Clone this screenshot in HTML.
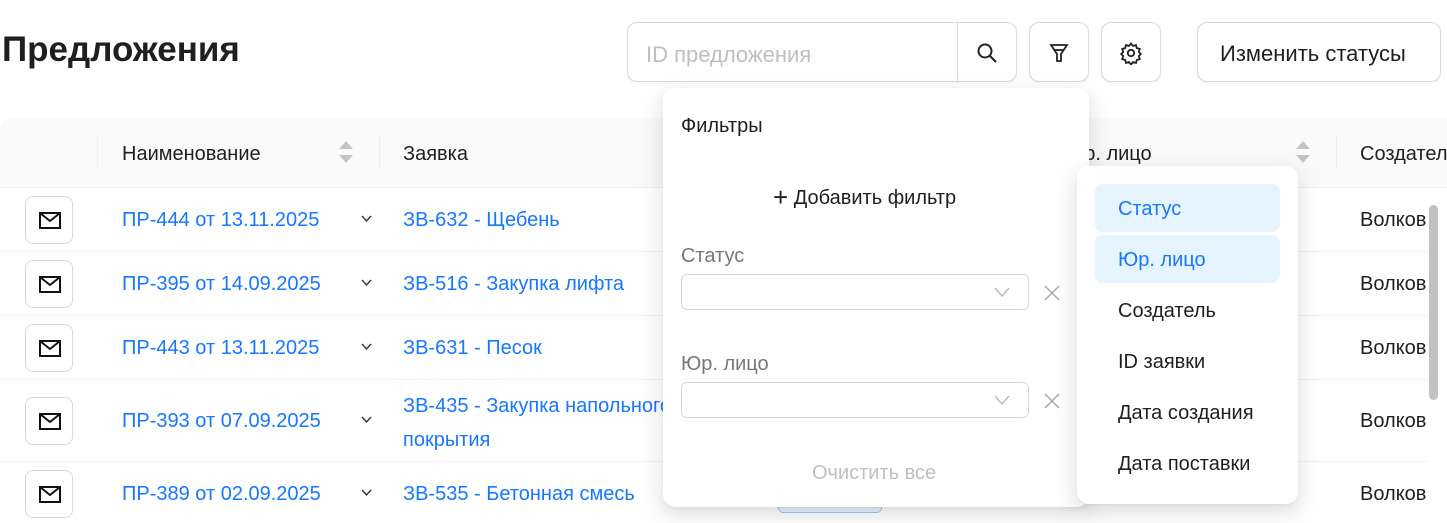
<!DOCTYPE html>
<html><head><meta charset="utf-8"><style>
*{box-sizing:border-box;margin:0;padding:0}
body{width:1447px;height:523px;overflow:hidden;background:#fff;font-family:"Liberation Sans","DejaVu Sans",sans-serif;color:#1f1f1f;position:relative}
.a{position:absolute}
.t{font-size:20px;white-space:nowrap}
.blue{color:#1677ff}
.btn{position:absolute;border:1px solid #d9d9d9;border-radius:10px;background:#fff;box-shadow:0 2px 0 rgba(0,0,0,.02)}
.row{position:absolute;left:0;width:1447px;border-bottom:1px solid #f0f0f0}
.mail{position:absolute;left:25px;width:48px;height:48px;border:1px solid #d9d9d9;border-radius:8px;background:#fff}
.mail svg{position:absolute;left:13px;top:15px}
.chev{position:absolute;left:361px}
.pop{position:absolute;background:#fff;border-radius:12px;box-shadow:0 6px 16px rgba(0,0,0,.08),0 3px 6px -4px rgba(0,0,0,.12),0 9px 28px 8px rgba(0,0,0,.05)}
.sel{position:absolute;left:18px;width:348px;height:36px;border:1px solid #d9d9d9;border-radius:6px}
.item{position:absolute;left:18px;width:185px;height:48px;border-radius:8px;font-size:20px;padding:14px 0 0 23px;white-space:nowrap}
</style></head><body>
<div class="a" style="left:2px;top:30px;font-size:35px;font-weight:bold">Предложения</div>

<div class="btn" style="left:627px;top:22px;width:390px;height:60px"></div>
<div class="a" style="left:957px;top:22px;width:1px;height:60px;background:#d9d9d9"></div>
<div class="a t" style="left:646px;top:42px;color:#bfbfbf;font-size:22px">ID предложения</div>
<svg class="a" style="left:975px;top:41px" width="24" height="24" viewBox="0 0 24 24" fill="none" stroke="#222" stroke-width="2"><circle cx="10" cy="10" r="6.5"/><path d="M15 15l6 6"/></svg>
<div class="btn" style="left:1029px;top:22px;width:60px;height:60px"></div>
<svg class="a" style="left:1048px;top:42px" width="22" height="22" viewBox="0 0 22 22" fill="none" stroke="#222" stroke-width="1.8"><path d="M3 3h16l-6 9v7h-4v-7z"/><path d="M6 8h10"/></svg>
<div class="btn" style="left:1101px;top:22px;width:60px;height:60px"></div>
<svg class="a" style="left:1119px;top:41px" width="24" height="24" viewBox="0 0 24 24" fill="none" stroke="#222" stroke-width="1.8"><circle cx="12" cy="12" r="3.2"/><path d="M12 2.5l2 2.5 3-1 .8 3 3 1-1 3 2 2-2 2 1 3-3 1-.8 3-3-1-2 2.5-2-2.5-3 1-.8-3-3-1 1-3-2-2 2-2-1-3 3-1 .8-3 3 1z"/></svg>
<div class="btn" style="left:1197px;top:22px;width:244px;height:60px"></div>
<div class="a t" style="left:1220px;top:41px;font-size:22px">Изменить статусы</div>

<div class="a" style="left:0;top:118px;width:1447px;height:70px;background:#fafafa;border-radius:10px 0 0 0;border-bottom:1px solid #f0f0f0"></div>
<div class="a" style="left:97px;top:136px;width:1px;height:34px;background:#f0f0f0"></div>
<div class="a" style="left:379px;top:136px;width:1px;height:34px;background:#f0f0f0"></div>
<div class="a" style="left:1336px;top:136px;width:1px;height:34px;background:#f0f0f0"></div>
<div class="a t" style="left:122px;top:143px">Наименование</div>
<div class="a" style="left:339px;top:141px;width:0;height:0;border:7px solid transparent;border-bottom:8px solid #c4c4c4;border-top:0"></div>
<div class="a" style="left:339px;top:155px;width:0;height:0;border:7px solid transparent;border-top:8px solid #c4c4c4;border-bottom:0"></div>
<div class="a t" style="left:403px;top:143px">Заявка</div>
<div class="a t" style="left:1064px;top:143px">Юр. лицо</div>
<div class="a" style="left:1296px;top:141px;width:0;height:0;border:7px solid transparent;border-bottom:8px solid #c4c4c4;border-top:0"></div>
<div class="a" style="left:1296px;top:155px;width:0;height:0;border:7px solid transparent;border-top:8px solid #c4c4c4;border-bottom:0"></div>
<div class="a t" style="left:1360px;top:143px">Создатель</div>

<div class="row" style="top:187px;height:65px"></div>
<div class="row" style="top:251px;height:65px"></div>
<div class="row" style="top:315px;height:65px"></div>
<div class="row" style="top:379px;height:83px"></div>

<div class="mail" style="top:196px"><svg width="22" height="18" viewBox="0 0 22 18" fill="none" stroke="#111" stroke-width="2"><rect x="1" y="1" width="20" height="15"/><path d="M1 1l10 8 10-8"/></svg></div>
<div class="mail" style="top:260px"><svg width="22" height="18" viewBox="0 0 22 18" fill="none" stroke="#111" stroke-width="2"><rect x="1" y="1" width="20" height="15"/><path d="M1 1l10 8 10-8"/></svg></div>
<div class="mail" style="top:324px"><svg width="22" height="18" viewBox="0 0 22 18" fill="none" stroke="#111" stroke-width="2"><rect x="1" y="1" width="20" height="15"/><path d="M1 1l10 8 10-8"/></svg></div>
<div class="mail" style="top:397px"><svg width="22" height="18" viewBox="0 0 22 18" fill="none" stroke="#111" stroke-width="2"><rect x="1" y="1" width="20" height="15"/><path d="M1 1l10 8 10-8"/></svg></div>
<div class="mail" style="top:470px"><svg width="22" height="18" viewBox="0 0 22 18" fill="none" stroke="#111" stroke-width="2"><rect x="1" y="1" width="20" height="15"/><path d="M1 1l10 8 10-8"/></svg></div>

<div class="a t blue" style="left:122px;top:209px">ПР-444 от 13.11.2025</div>
<div class="a t blue" style="left:122px;top:273px">ПР-395 от 14.09.2025</div>
<div class="a t blue" style="left:122px;top:337px">ПР-443 от 13.11.2025</div>
<div class="a t blue" style="left:122px;top:410px">ПР-393 от 07.09.2025</div>
<div class="a t blue" style="left:122px;top:483px">ПР-389 от 02.09.2025</div>
<svg class="chev" style="top:215px" width="11" height="8" viewBox="0 0 11 8" fill="none" stroke="#333" stroke-width="1.4"><path d="M1 1l4.5 5 4.5-5"/></svg>
<svg class="chev" style="top:279px" width="11" height="8" viewBox="0 0 11 8" fill="none" stroke="#333" stroke-width="1.4"><path d="M1 1l4.5 5 4.5-5"/></svg>
<svg class="chev" style="top:343px" width="11" height="8" viewBox="0 0 11 8" fill="none" stroke="#333" stroke-width="1.4"><path d="M1 1l4.5 5 4.5-5"/></svg>
<svg class="chev" style="top:416px" width="11" height="8" viewBox="0 0 11 8" fill="none" stroke="#333" stroke-width="1.4"><path d="M1 1l4.5 5 4.5-5"/></svg>
<svg class="chev" style="top:489px" width="11" height="8" viewBox="0 0 11 8" fill="none" stroke="#333" stroke-width="1.4"><path d="M1 1l4.5 5 4.5-5"/></svg>
<div class="a t blue" style="left:403px;top:209px">ЗВ-632 - Щебень</div>
<div class="a t blue" style="left:403px;top:273px">ЗВ-516 - Закупка лифта</div>
<div class="a t blue" style="left:403px;top:337px">ЗВ-631 - Песок</div>
<div class="a t blue" style="left:403px;top:389px;line-height:34px">ЗВ-435 - Закупка напольного<br>покрытия</div>
<div class="a t blue" style="left:403px;top:483px">ЗВ-535 - Бетонная смесь</div>
<div class="a t" style="left:1360px;top:209px">Волков</div>
<div class="a t" style="left:1360px;top:273px">Волков</div>
<div class="a t" style="left:1360px;top:337px">Волков</div>
<div class="a t" style="left:1360px;top:410px">Волков</div>
<div class="a t" style="left:1360px;top:483px">Волков</div>
<div class="a" style="left:778px;top:505px;width:104px;height:8px;border:1px solid #91caff;border-top:0;background:#e6f4ff;border-radius:0 0 5px 5px"></div>
<div class="a" style="left:1427px;top:188px;width:20px;height:335px;background:#fff"></div>
<div class="a" style="left:1429px;top:205px;width:9px;height:195px;background:#c1c1c1;border-radius:5px"></div>

<div class="pop" style="left:663px;top:88px;width:426px;height:419px">
<div class="a t" style="left:18px;top:27px;font-size:20px">Фильтры</div>
<div class="a t" style="left:110px;top:92px"><span style="font-size:26px;position:relative;top:2px">+</span>&nbsp;Добавить фильтр</div>
<div class="a t" style="left:18px;top:157px;color:#777">Статус</div>
<div class="sel" style="top:186px"></div>
<svg class="a" style="left:331px;top:198px" width="16" height="12" viewBox="0 0 16 12" fill="none" stroke="#bbb" stroke-width="1.5"><path d="M1 2l7 8 7-8"/></svg>
<svg class="a" style="left:381px;top:197px" width="16" height="16" viewBox="0 0 16 16" stroke="#aaa" stroke-width="1.5"><path d="M1 1l14 14M15 1L1 15"/></svg>
<div class="a t" style="left:18px;top:265px;color:#777">Юр. лицо</div>
<div class="sel" style="top:294px"></div>
<svg class="a" style="left:331px;top:306px" width="16" height="12" viewBox="0 0 16 12" fill="none" stroke="#bbb" stroke-width="1.5"><path d="M1 2l7 8 7-8"/></svg>
<svg class="a" style="left:381px;top:305px" width="16" height="16" viewBox="0 0 16 16" stroke="#aaa" stroke-width="1.5"><path d="M1 1l14 14M15 1L1 15"/></svg>
<div class="a t" style="left:149px;top:374px;color:#bfbfbf">Очистить все</div>
</div>

<div class="pop" style="left:1077px;top:166px;width:221px;height:338px">
<div class="item blue" style="top:18px;background:#e6f4ff">Статус</div>
<div class="item blue" style="top:69px;background:#e6f4ff">Юр. лицо</div>
<div class="item" style="top:120px">Создатель</div>
<div class="item" style="top:171px">ID заявки</div>
<div class="item" style="top:222px">Дата создания</div>
<div class="item" style="top:273px">Дата поставки</div>
</div>
</body></html>
